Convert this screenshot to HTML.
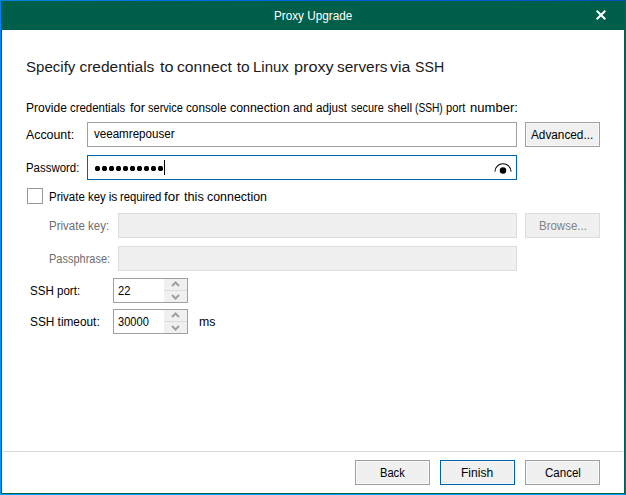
<!DOCTYPE html>
<html>
<head>
<meta charset="utf-8">
<style>
html,body{margin:0;padding:0;}
body{width:626px;height:495px;position:relative;overflow:hidden;background:#fff;font-family:"Liberation Sans",sans-serif;}
.a{position:absolute;}
.t{position:absolute;white-space:nowrap;font-size:12px;line-height:12px;color:#000;transform-origin:0 0;}
.box{position:absolute;box-sizing:border-box;}
.btn{width:75px;height:25px;border:1px solid #a0a0a0;background:#f0f0f0;box-shadow:inset 0 0 0 1px #f8f8f8;}
.dot{width:5px;height:5px;border-radius:1.6px;background:#000;}
</style>
</head>
<body>
<div class="a" style="left:0;top:0;width:626px;height:1px;background:linear-gradient(90deg,#0382e2 0%,#0062e0 50%,#0850c0 100%);"></div>
<div class="a" style="left:0;top:0;width:1px;height:495px;background:linear-gradient(180deg,#0382e2 0%,#0088ff 12%,#009aff 100%);"></div>
<div class="a" style="left:0;top:494px;width:626px;height:1px;background:linear-gradient(90deg,#009aff 0%,#00a0f0 100%);"></div>
<div class="a" style="left:625px;top:0;width:1px;height:495px;background:linear-gradient(180deg,#0850c0 0%,#0a48d8 12%,#0058ff 85%,#0060ff 100%);"></div>
<div class="a" style="left:1px;top:1px;width:624px;height:493px;background:#005f4b;"></div>
<div class="a" style="left:2px;top:30px;width:622px;height:463px;background:#fff;"></div>

<div class="t" style="left:273.82px;top:10px;font-size:12px;line-height:12px;color:#fff;transform:scaleX(0.9772)">Proxy Upgrade</div>
<svg class="a" style="left:0;top:0" width="626" height="30"><path d="M596.7 10.7 L605.3 19.3 M605.3 10.7 L596.7 19.3" stroke="#fff" stroke-width="2" fill="none"/></svg>

<div class="t" style="left:25.73px;top:59px;font-size:15.5px;line-height:15.5px;color:#1a1a1a;transform:scaleX(0.972)">Specify</div><div class="t" style="left:79.4px;top:59px;font-size:15.5px;line-height:15.5px;color:#1a1a1a;transform:scaleX(1.0)">credentials</div><div class="t" style="left:159.75px;top:59px;font-size:15.5px;line-height:15.5px;color:#1a1a1a;transform:scaleX(1.0458)">to</div><div class="t" style="left:176.89px;top:59px;font-size:15.5px;line-height:15.5px;color:#1a1a1a;transform:scaleX(1.0094)">connect</div><div class="t" style="left:236.8px;top:59px;font-size:15.5px;line-height:15.5px;color:#1a1a1a;transform:scaleX(1.0)">to</div><div class="t" style="left:253.44px;top:59px;font-size:15.5px;line-height:15.5px;color:#1a1a1a;transform:scaleX(0.9639)">Linux</div><div class="t" style="left:293.55px;top:59px;font-size:15.5px;line-height:15.5px;color:#1a1a1a;transform:scaleX(1.0486)">proxy</div><div class="t" style="left:336.61px;top:59px;font-size:15.5px;line-height:15.5px;color:#1a1a1a;transform:scaleX(0.9939)">servers</div><div class="t" style="left:390.1px;top:59px;font-size:15.5px;line-height:15.5px;color:#1a1a1a;transform:scaleX(1.025)">via</div><div class="t" style="left:414.69px;top:59px;font-size:15.5px;line-height:15.5px;color:#1a1a1a;transform:scaleX(0.9133)">SSH</div>
<div class="t" style="left:25.69px;top:102px;font-size:12px;line-height:12px;color:#000;transform:scaleX(1.0051)">Provide</div><div class="t" style="left:69.8px;top:102px;font-size:12px;line-height:12px;color:#000;transform:scaleX(0.9517)">credentials</div><div class="t" style="left:129.5px;top:102px;font-size:12px;line-height:12px;color:#000;transform:scaleX(1.0786)">for</div><div class="t" style="left:147.5px;top:102px;font-size:12px;line-height:12px;color:#000;transform:scaleX(0.9184)">service</div><div class="t" style="left:186.2px;top:102px;font-size:12px;line-height:12px;color:#000;transform:scaleX(0.978)">console</div><div class="t" style="left:230.4px;top:102px;font-size:12px;line-height:12px;color:#000;transform:scaleX(1.0298)">connection</div><div class="t" style="left:293.3px;top:102px;font-size:12px;line-height:12px;color:#000;transform:scaleX(0.9684)">and</div><div class="t" style="left:316.2px;top:102px;font-size:12px;line-height:12px;color:#000;transform:scaleX(0.9688)">adjust</div><div class="t" style="left:351.1px;top:102px;font-size:12px;line-height:12px;color:#000;transform:scaleX(0.9083)">secure</div><div class="t" style="left:387.5px;top:102px;font-size:12px;line-height:12px;color:#000;transform:scaleX(1.0)">shell</div><div class="t" style="left:415.3px;top:102px;font-size:12px;line-height:12px;color:#000;transform:scaleX(0.85)">(SSH)</div><div class="t" style="left:446.37px;top:102px;font-size:12px;line-height:12px;color:#000;transform:scaleX(0.93)">port</div><div class="t" style="left:469.51px;top:102px;font-size:12px;line-height:12px;color:#000;transform:scaleX(1.0881)">number:</div>

<div class="t" style="left:25.9px;top:129px;font-size:12px;line-height:12px;color:#000;transform:scaleX(1.0304)">Account:</div>
<div class="box" style="left:87px;top:122px;width:430px;height:25px;border:1px solid #a0a0a0;"></div>
<div class="t" style="left:93.9px;top:128px;font-size:12px;line-height:12px;color:#000;transform:scaleX(0.9655)">veeamrepouser</div>
<div class="box btn" style="left:525px;top:122px;border-color:#a0a0a0;"></div>
<div class="t" style="left:531.1px;top:129px;font-size:12px;line-height:12px;color:#000;transform:scaleX(0.9823)">Advanced...</div>

<div class="t" style="left:25.65px;top:162px;font-size:12px;line-height:12px;color:#000;transform:scaleX(0.9519)">Password:</div>
<div class="box" style="left:87px;top:155px;width:430px;height:25px;border:1px solid #0063b1;"></div>
<svg class="a" style="left:0;top:0" width="626" height="495"><path d="M96.2 166 h2.6 l1.2 1.2 v2.6 l-1.2 1.2 h-2.6 l-1.2 -1.2 v-2.6 z" fill="#000"/><path d="M103.2 166 h2.6 l1.2 1.2 v2.6 l-1.2 1.2 h-2.6 l-1.2 -1.2 v-2.6 z" fill="#000"/><path d="M110.2 166 h2.6 l1.2 1.2 v2.6 l-1.2 1.2 h-2.6 l-1.2 -1.2 v-2.6 z" fill="#000"/><path d="M117.2 166 h2.6 l1.2 1.2 v2.6 l-1.2 1.2 h-2.6 l-1.2 -1.2 v-2.6 z" fill="#000"/><path d="M124.2 166 h2.6 l1.2 1.2 v2.6 l-1.2 1.2 h-2.6 l-1.2 -1.2 v-2.6 z" fill="#000"/><path d="M131.2 166 h2.6 l1.2 1.2 v2.6 l-1.2 1.2 h-2.6 l-1.2 -1.2 v-2.6 z" fill="#000"/><path d="M138.2 166 h2.6 l1.2 1.2 v2.6 l-1.2 1.2 h-2.6 l-1.2 -1.2 v-2.6 z" fill="#000"/><path d="M145.2 166 h2.6 l1.2 1.2 v2.6 l-1.2 1.2 h-2.6 l-1.2 -1.2 v-2.6 z" fill="#000"/><path d="M152.2 166 h2.6 l1.2 1.2 v2.6 l-1.2 1.2 h-2.6 l-1.2 -1.2 v-2.6 z" fill="#000"/><path d="M159.2 166 h2.6 l1.2 1.2 v2.6 l-1.2 1.2 h-2.6 l-1.2 -1.2 v-2.6 z" fill="#000"/></svg>
<div class="a" style="left:164px;top:160px;width:1px;height:15px;background:#000;"></div>
<svg class="a" style="left:0;top:0" width="626" height="495">
<path d="M495 171.3 A8.01 8.01 0 0 1 511 171.3" stroke="#000" stroke-width="1.05" stroke-linecap="round" fill="none"/>
<circle cx="503" cy="170.4" r="3.25" fill="#000"/>
</svg>

<div class="box" style="left:27px;top:188px;width:16px;height:16px;border:1px solid #999;"></div>
<div class="t" style="left:48.64px;top:191px;font-size:12px;line-height:12px;color:#000;transform:scaleX(0.9583)">Private</div><div class="t" style="left:87.55px;top:191px;font-size:12px;line-height:12px;color:#000;transform:scaleX(0.95)">key</div><div class="t" style="left:108.7px;top:191px;font-size:12px;line-height:12px;color:#000;transform:scaleX(1.0)">is</div><div class="t" style="left:119.76px;top:191px;font-size:12px;line-height:12px;color:#000;transform:scaleX(0.9381)">required</div><div class="t" style="left:164.2px;top:191px;font-size:12px;line-height:12px;color:#000;transform:scaleX(1.1143)">for</div><div class="t" style="left:184.0px;top:191px;font-size:12px;line-height:12px;color:#000;transform:scaleX(1.0611)">this</div><div class="t" style="left:207.4px;top:191px;font-size:12px;line-height:12px;color:#000;transform:scaleX(1.0333)">connection</div>

<div class="t" style="left:48.74px;top:220px;font-size:12px;line-height:12px;color:#6d6d6d;transform:scaleX(0.959)">Private key:</div>
<div class="box" style="left:118px;top:213px;width:399px;height:25px;border:1px solid #dcdcdc;background:#f0f0f0;"></div>
<div class="box" style="left:525px;top:213px;width:75px;height:25px;border:1px solid #dcdcdc;background:#f0f0f0;"></div>
<div class="t" style="left:538.64px;top:220px;font-size:12px;line-height:12px;color:#838383;transform:scaleX(0.9562)">Browse...</div>

<div class="t" style="left:48.78px;top:253px;font-size:12px;line-height:12px;color:#6d6d6d;transform:scaleX(0.9169)">Passphrase:</div>
<div class="box" style="left:118px;top:246px;width:399px;height:25px;border:1px solid #dcdcdc;background:#f0f0f0;"></div>

<div class="t" style="left:30.14px;top:285px;font-size:12px;line-height:12px;color:#000;transform:scaleX(0.964)">SSH port:</div>
<div class="box" style="left:113px;top:278px;width:75px;height:25px;border:1px solid #a0a0a0;"></div><div class="a" style="left:164px;top:279px;width:23px;height:23px;background:#f0f0f0;"></div><div class="a" style="left:164px;top:290px;width:23px;height:1px;background:#dcdcdc;"></div><svg class="a" style="left:0;top:0" width="626" height="495"><path d="M172 286 L175.5 282.5 L179 286 M172 295 L175.5 298.5 L179 295" stroke="#a0a0a0" stroke-width="2" fill="none"/></svg>
<div class="t" style="left:118.32px;top:285px;font-size:12px;line-height:12px;color:#000;transform:scaleX(0.9292)">22</div>

<div class="t" style="left:30.11px;top:316px;font-size:12px;line-height:12px;color:#000;transform:scaleX(0.9855)">SSH timeout:</div>
<div class="box" style="left:113px;top:309px;width:75px;height:25px;border:1px solid #a0a0a0;"></div><div class="a" style="left:164px;top:310px;width:23px;height:23px;background:#f0f0f0;"></div><div class="a" style="left:164px;top:321px;width:23px;height:1px;background:#dcdcdc;"></div><svg class="a" style="left:0;top:0" width="626" height="495"><path d="M172 317 L175.5 313.5 L179 317 M172 326 L175.5 329.5 L179 326" stroke="#a0a0a0" stroke-width="2" fill="none"/></svg>
<div class="t" style="left:118.33px;top:316px;font-size:12px;line-height:12px;color:#000;transform:scaleX(0.9234)">30000</div>
<div class="t" style="left:198.57px;top:316px;font-size:12px;line-height:12px;color:#000;transform:scaleX(1.0267)">ms</div>

<div class="a" style="left:3px;top:451px;width:620px;height:1px;background:#d8d8d8;"></div>
<div class="box btn" style="left:355px;top:460px;border-color:#a0a0a0;"></div>
<div class="t" style="left:379.87px;top:467px;font-size:12px;line-height:12px;color:#000;transform:scaleX(0.9269)">Back</div>
<div class="box btn" style="left:440px;top:460px;border-color:#0063b1;"></div>
<div class="t" style="left:461.4px;top:467px;font-size:12px;line-height:12px;color:#000;transform:scaleX(1.0033)">Finish</div>
<div class="box btn" style="left:525px;top:460px;border-color:#a0a0a0;"></div>
<div class="t" style="left:544.74px;top:467px;font-size:12px;line-height:12px;color:#000;transform:scaleX(0.9611)">Cancel</div>
</body>
</html>
